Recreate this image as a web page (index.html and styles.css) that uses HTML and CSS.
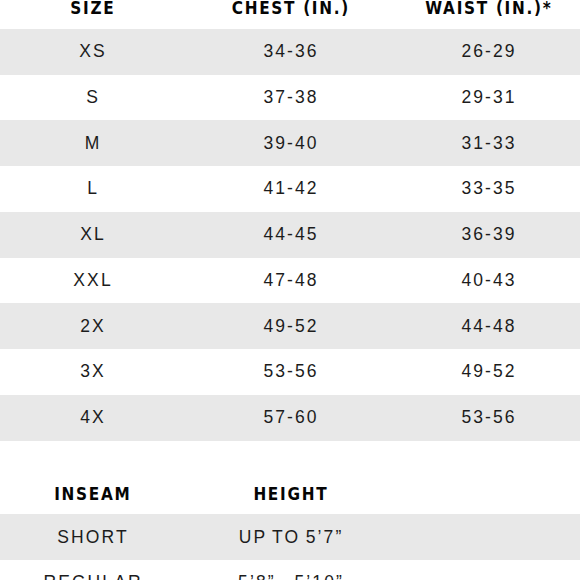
FILE: index.html
```html
<!DOCTYPE html>
<html>
<head>
<meta charset="utf-8">
<link rel="stylesheet" href="styles.css">
</head>
<body>
<div class="chart">
  <div class="row head"><div>SIZE</div><div>CHEST (IN.)</div><div>WAIST (IN.)*</div></div>
  <div class="row grey"><div>XS</div><div>34-36</div><div>26-29</div></div>
  <div class="row"><div>S</div><div>37-38</div><div>29-31</div></div>
  <div class="row grey"><div>M</div><div>39-40</div><div>31-33</div></div>
  <div class="row"><div>L</div><div>41-42</div><div>33-35</div></div>
  <div class="row grey"><div>XL</div><div>44-45</div><div>36-39</div></div>
  <div class="row"><div>XXL</div><div>47-48</div><div>40-43</div></div>
  <div class="row grey"><div>2X</div><div>49-52</div><div>44-48</div></div>
  <div class="row"><div>3X</div><div>53-56</div><div>49-52</div></div>
  <div class="row grey"><div>4X</div><div>57-60</div><div>53-56</div></div>
</div>
<div class="chart second">
  <div class="row head"><div>INSEAM</div><div>HEIGHT</div><div></div></div>
  <div class="row grey"><div>SHORT</div><div>UP TO 5’7”</div><div></div></div>
  <div class="row"><div>REGULAR</div><div>5’8” - 5’10”</div><div></div></div>
</div>
</body>
</html>
```
FILE: styles.css
```css
html, body {
  margin: 0;
  padding: 0;
  background: #ffffff;
}
body {
  overflow: hidden;
  font-family: "Liberation Sans", Arial, sans-serif;
  color: #1c1c1c;
}
.chart {
  margin-top: -17px;
}
.chart.second {
  margin-top: 28px;
}
.row {
  display: grid;
  grid-template-columns: 184px 212px 184px;
  height: 45.75px;
  align-items: center;
  font-size: 17.5px;
  letter-spacing: 2.1px;
}
.row > div {
  text-align: center;
  text-indent: 2.1px;
  word-spacing: -1.5px;
}
.row.grey {
  background: #e8e8e8;
}
.row.head {
  box-sizing: border-box;
  padding-top: 5px;
  font-family: "DejaVu Sans Condensed", "DejaVu Sans", sans-serif;
  font-stretch: condensed;
  font-weight: 700;
  font-size: 17px;
  letter-spacing: 1.7px;
  color: #050505;
}
.row.head > div {
  text-indent: 1.7px;
  word-spacing: 0;
}
```
